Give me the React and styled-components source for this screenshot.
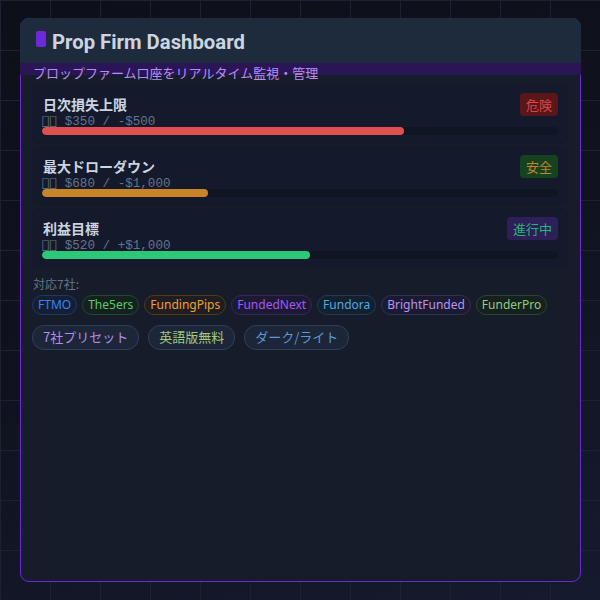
import React from "react";
import styled, { createGlobalStyle } from "styled-components";

const Global = createGlobalStyle`
  html, body { margin: 0; padding: 0; }
  body {
    width: 600px;
    height: 600px;
    overflow: hidden;
    font-family: "Noto Sans", "Noto Sans CJK JP", sans-serif;
    background-color: #0f121d;
    background-image:
      linear-gradient(#1c2231 1px, transparent 1px),
      linear-gradient(90deg, #1c2231 1px, transparent 1px),
      linear-gradient(160deg, #0d1019 0%, #10131f 50%, #151a2f 100%);
    background-size: 50px 50px, 50px 50px, 100% 100%;
  }
`;

const Page = styled.div`
  box-sizing: border-box;
  width: 600px;
  height: 600px;
  padding: 18px 19px 18px 20px;
  display: flex;
`;

const Card = styled.div`
  flex: 1;
  display: flex;
  flex-direction: column;
  background: #161c2a;
  border: 1px solid #6d28d9;
  border-radius: 9px;
`;

const Header = styled.div`
  margin: -1px -1px 0;
  height: 45px;
  box-sizing: border-box;
  background: #1e2b3d;
  border-radius: 9px 9px 0 0;
  display: flex;
  align-items: center;
  gap: 6px;
  padding: 2px 16px 0;
`;

const Mark = styled.span`
  width: 10px;
  height: 16px;
  border-radius: 2px;
  background: #6d28d9;
  margin-top: -5px;
`;

const Title = styled.h1`
  margin: 0;
  font-family: Roboto, "Noto Sans CJK JP", sans-serif;
  font-weight: 700;
  font-size: 20.3px;
  line-height: 28px;
  color: #cbd5e1;
`;

const Subtitle = styled.div`
  margin: 0 -1px;
  height: 12px;
  background: #2a1654;
  color: #b68ef2;
  font-size: 13px;
  line-height: 20px;
  padding-left: 13px;
  white-space: nowrap;
  font-family: "Noto Sans CJK JP", sans-serif;
`;

const Body = styled.div`
  display: flex;
  flex-direction: column;
  padding: 9px 12px 0 11px;
`;

const Rows = styled.div`
  display: flex;
  flex-direction: column;
  gap: 2px;
`;

const Row = styled.div`
  background: #141a2b;
  border-radius: 8px;
  padding: 9px 10px;
  display: flex;
  flex-direction: column;
`;

const RowHead = styled.div`
  display: flex;
  justify-content: space-between;
  align-items: flex-start;
`;

const RowInfo = styled.div`
  display: flex;
  flex-direction: column;
`;

const RowTitle = styled.div`
  font-family: "Noto Sans CJK JP", sans-serif;
  font-weight: 700;
  font-size: 14px;
  line-height: 20px;
  color: #cbd5e1;
  padding-left: 1px;
  margin-top: 1px;
`;

const Meta = styled.div`
  height: 13px;
  font-family: "Liberation Mono", monospace;
  font-size: 12.6px;
  line-height: 13px;
  color: #64748b;
  white-space: pre;
`;

const Glyphs = styled.span`
  font-family: "DejaVu Sans Mono", monospace;
  line-height: 13px;
`;

const Badge = styled.span`
  font-family: "Noto Sans CJK JP", sans-serif;
  font-size: 13px;
  line-height: 23px;
  height: 23px;
  padding: 0 6px;
  border-radius: 4px;
  background: ${(p) => p.$bg};
  color: ${(p) => p.$fg};
`;

const Track = styled.div`
  height: 8px;
  border-radius: 4px;
  background: #0f1522;
  overflow: hidden;
`;

const Fill = styled.div`
  height: 100%;
  border-radius: 4px;
  background: ${(p) => p.$color};
`;

const Label = styled.div`
  margin-top: 8px;
  font-family: "Noto Sans CJK JP", sans-serif;
  font-size: 12px;
  line-height: 16px;
  color: #64748b;
  padding-left: 1px;
`;

const ChipRow = styled.div`
  display: flex;
  flex-wrap: wrap;
  gap: ${(p) => p.$gap}px;
  margin-top: ${(p) => p.$mt}px;
`;

const Chip = styled.span`
  font-family: "Noto Sans", sans-serif;
  font-size: 12px;
  line-height: 16px;
  padding: 1px 5px;
  border-radius: 10px;
  border: 1px solid ${(p) => p.$border};
  background: ${(p) => p.$bg};
  color: ${(p) => p.$fg};
`;

const Pill = styled.span`
  font-family: "Noto Sans CJK JP", sans-serif;
  font-size: 13px;
  line-height: 16px;
  padding: 3px 10px 4px;
  border-radius: 12px;
  border: 1px solid #2f3f58;
  background: #1c2638;
  color: ${(p) => p.$fg};
`;

const metrics = [
  {
    title: "日次損失上限",
    meta: " $350 / -$500",
    badge: "危険",
    bg: "#5a1619",
    fg: "#d94848",
    fill: "#df5151",
    pct: 70.2,
  },
  {
    title: "最大ドローダウン",
    meta: " $680 / -$1,000",
    badge: "安全",
    bg: "#15421f",
    fg: "#c2842a",
    fill: "#c98428",
    pct: 32.2,
  },
  {
    title: "利益目標",
    meta: " $520 / +$1,000",
    badge: "進行中",
    bg: "#2d1f58",
    fg: "#24b870",
    fill: "#2cc877",
    pct: 52,
  },
];

const firms = [
  { name: "FTMO", fg: "#3b82f6", border: "#1e3a5f", bg: "#141f35" },
  { name: "The5ers", fg: "#55cc66", border: "#22492d", bg: "#15211f" },
  { name: "FundingPips", fg: "#f0a030", border: "#553a14", bg: "#1d1d22" },
  { name: "FundedNext", fg: "#a855f7", border: "#3a2462", bg: "#1a1b33" },
  { name: "Fundora", fg: "#4aaee0", border: "#1e3c55", bg: "#141f30" },
  { name: "BrightFunded", fg: "#bb92f2", border: "#3a2d55", bg: "#191c31" },
  { name: "FunderPro", fg: "#8ccf7f", border: "#29472d", bg: "#16201f" },
];

const pills = [
  { text: "7社プリセット", fg: "#b58bf0" },
  { text: "英語版無料", fg: "#a0c97c" },
  { text: "ダーク/ライト", fg: "#5b9bd5" },
];

export default function App() {
  return (
    <>
      <Global />
      <Page>
        <Card>
          <Header>
            <Mark />
            <Title>Prop Firm Dashboard</Title>
          </Header>
          <Subtitle>プロップファーム口座をリアルタイム監視・管理</Subtitle>
          <Body>
            <Rows>
              {metrics.map((m) => (
                <Row key={m.title}>
                  <RowHead>
                    <RowInfo>
                      <RowTitle>{m.title}</RowTitle>
                      <Meta>
                        <Glyphs>{"\uE000\uE001"}</Glyphs>
                        {m.meta}
                      </Meta>
                    </RowInfo>
                    <Badge $bg={m.bg} $fg={m.fg}>
                      {m.badge}
                    </Badge>
                  </RowHead>
                  <Track>
                    <Fill $color={m.fill} style={{ width: `${m.pct}%` }} />
                  </Track>
                </Row>
              ))}
            </Rows>
            <Label>対応7社:</Label>
            <ChipRow $gap={5} $mt={3}>
              {firms.map((f) => (
                <Chip key={f.name} $fg={f.fg} $border={f.border} $bg={f.bg}>
                  {f.name}
                </Chip>
              ))}
            </ChipRow>
            <ChipRow $gap={9} $mt={10}>
              {pills.map((p) => (
                <Pill key={p.text} $fg={p.fg}>
                  {p.text}
                </Pill>
              ))}
            </ChipRow>
          </Body>
        </Card>
      </Page>
    </>
  );
}
